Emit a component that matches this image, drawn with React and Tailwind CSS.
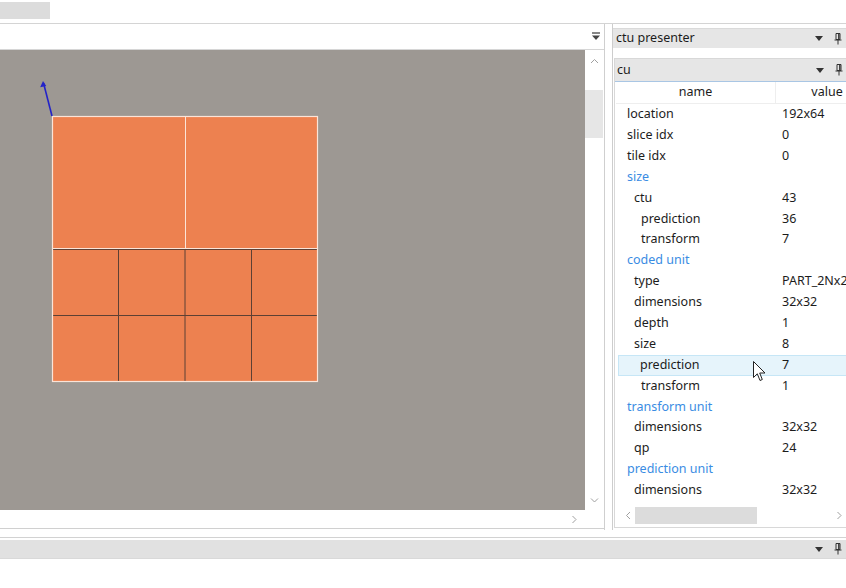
import React from "react";

const ROWS = [
  { name: "location", value: "192x64", level: 0 },
  { name: "slice idx", value: "0", level: 0 },
  { name: "tile idx", value: "0", level: 0 },
  { name: "size", level: 0, group: true },
  { name: "ctu", value: "43", level: 1 },
  { name: "prediction", value: "36", level: 2 },
  { name: "transform", value: "7", level: 2 },
  { name: "coded unit", level: 0, group: true },
  { name: "type", value: "PART_2Nx2N", level: 1 },
  { name: "dimensions", value: "32x32", level: 1 },
  { name: "depth", value: "1", level: 1 },
  { name: "size", value: "8", level: 1 },
  { name: "prediction", value: "7", level: 2, hover: true },
  { name: "transform", value: "1", level: 2 },
  { name: "transform unit", level: 0, group: true },
  { name: "dimensions", value: "32x32", level: 1 },
  { name: "qp", value: "24", level: 1 },
  { name: "prediction unit", level: 0, group: true },
  { name: "dimensions", value: "32x32", level: 1 },
  { name: "intra mode", value: "Intra", level: 1 },
];

const INDENT = ["pl-[10px]", "pl-[17px]", "pl-[24px]"];

const DropArrow = () => (
  <svg width="8" height="5" viewBox="0 0 8 5">
    <path d="M0 0 H8 L4 5 Z" fill="#333" />
  </svg>
);

const Pin = () => (
  <svg width="8" height="12" viewBox="0 0 8 12">
    <path d="M2 0.5 H6 V6.5 H2 Z" fill="none" stroke="#333" strokeWidth="1" />
    <path d="M4.8 0.5 V6.5" stroke="#333" strokeWidth="1.4" />
    <path d="M0.5 7 H7.5" stroke="#333" strokeWidth="1" />
    <path d="M4 7 V11.5" stroke="#333" strokeWidth="1" />
  </svg>
);

const MenuArrow = () => (
  <svg width="10" height="9" viewBox="0 0 10 9">
    <path d="M1 1 H9" stroke="#444" strokeWidth="1.3" />
    <path d="M1 3.5 H9 L5 8 Z" fill="#444" />
  </svg>
);

const Chevron = ({ dir }) => {
  const d = {
    up: "M1 5 L4.5 1.5 L8 5",
    down: "M1 1.5 L4.5 5 L8 1.5",
    left: "M5 1 L1.5 4.5 L5 8",
    right: "M1.5 1 L5 4.5 L1.5 8",
  }[dir];
  const vertical = dir === "up" || dir === "down";
  return (
    <svg width={vertical ? 9 : 7} height={vertical ? 7 : 9} viewBox={vertical ? "0 0 9 7" : "0 0 7 9"}>
      <path d={d} fill="none" stroke="#a0a0a0" strokeWidth="1" />
    </svg>
  );
};

const CtuCanvas = () => {
  const x0 = 52;
  const y0 = 66;
  const s = 266;
  const h = s / 2;
  const q = s / 4;
  return (
    <svg width="585" height="460" viewBox="0 0 585 460" className="block">
      <rect x="0" y="0" width="585" height="460" fill="#9d9893" />
      <rect x={x0} y={y0} width={s} height={s} fill="#ed8150" />
      {[1, 2, 3].map((i) => (
        <line key={"v" + i} x1={x0 + q * i} y1={y0 + h} x2={x0 + q * i} y2={y0 + s} stroke="#5d4034" strokeWidth="1" />
      ))}
      <line x1={x0} y1={y0 + h + 0.5} x2={x0 + s} y2={y0 + h + 0.5} stroke="#5d4034" strokeWidth="1" />
      <line x1={x0} y1={y0 + h + q} x2={x0 + s} y2={y0 + h + q} stroke="#5d4034" strokeWidth="1" />
      <rect x={x0 + 0.5} y={y0 + 0.5} width={h} height={h - 1} fill="none" stroke="#fbe4d8" strokeWidth="1" />
      <rect x={x0 + h + 0.5} y={y0 + 0.5} width={h - 1} height={h - 1} fill="none" stroke="#fbe4d8" strokeWidth="1" />
      <rect x={x0 + 0.5} y={y0 + 0.5} width={s - 1} height={s - 1} fill="none" stroke="#fbe4d8" strokeWidth="1.2" />
      <line x1={x0} y1={y0} x2={43.5} y2={33} stroke="#2323c8" strokeWidth="1.6" />
      <path d="M43 31 L40.2 37.2 L46.2 36 Z" fill="#2323c8" />
    </svg>
  );
};

const Cursor = () => (
  <svg width="13" height="21" viewBox="0 0 13 21">
    <path d="M0.5 0.5 V16.5 L4.3 12.8 L7 19.5 L9.3 18.5 L6.7 12 H12 Z" fill="#fff" stroke="#222" strokeWidth="1" strokeLinejoin="round" />
  </svg>
);

export default function App() {
  return (
    <div className="relative w-[846px] h-[588px] overflow-hidden bg-white flex flex-col font-['Noto_Sans',sans-serif] text-[12.5px] text-[#1c1c1c]">
      {/* top tab strip */}
      <div className="h-[24px] shrink-0 border-b border-[#d4d4d4]">
        <div className="mt-[2px] w-[50px] h-[17px] bg-[#dcdcdc]" />
      </div>

      <div className="flex h-[506px] shrink-0">
        {/* picture panel */}
        <div className="w-[605px] shrink-0 flex flex-col border-r border-[#cfcfcf]">
          <div className="h-[26px] shrink-0 flex items-center justify-end pr-[3px] border-b border-[#d6d6d6]">
            <MenuArrow />
          </div>
          <div className="flex h-[460px] shrink-0">
            <div className="w-[585px] shrink-0">
              <CtuCanvas />
            </div>
            <div className="w-[18px] shrink-0 flex flex-col items-center">
              <div className="h-[20px] flex items-center pt-[2px]">
                <Chevron dir="up" />
              </div>
              <div className="mt-[20px] w-full h-[48px] bg-[#e6e6e6]" />
              <div className="flex-1" />
              <div className="h-[20px] flex items-center">
                <Chevron dir="down" />
              </div>
            </div>
          </div>
          <div className="h-[19px] shrink-0 flex items-center justify-end pr-[26px] border-b border-[#d0d0d0]">
            <Chevron dir="right" />
          </div>
        </div>

        {/* dock column */}
        <div className="ml-[7px] flex-1 min-w-0 border-l border-[#cdcdcd] flex flex-col overflow-hidden">
          <div className="mt-[4px] h-[20px] shrink-0 bg-[#e6e6e6] border-t border-[#dadada] flex items-center pl-[3px] pr-[4px]">
            <span className="flex-1">ctu presenter</span>
            <span className="mr-[11px] flex"><DropArrow /></span>
            <Pin />
          </div>

          <div className="mt-[10px] ml-[1px] flex-1 min-h-0 border border-[#d8d8d8] border-r-0 flex flex-col mb-[2px]">
            <div className="h-[23px] shrink-0 bg-[#e6e6e6] border-b border-[#a9c6e4] flex items-center pl-[2px] pr-[3px]">
              <span className="flex-1">cu</span>
              <span className="mr-[11px] flex"><DropArrow /></span>
              <Pin />
            </div>

            <div className="relative flex-1 min-h-0 ml-[1px] overflow-hidden">
              <div className="flex h-[22px] items-center border-b border-[#eeeeee] w-[262px]">
                <div className="w-[160px] text-center border-r border-[#eeeeee] h-full flex items-center justify-center">name</div>
                <div className="w-[102px] text-center">value</div>
              </div>
              <div className="w-[262px]">
                {ROWS.map((r, i) => (
                  <div
                    key={i}
                    className={
                      "flex items-center h-[20.9px] whitespace-nowrap " +
                      (r.hover ? "ml-[2px] bg-[#e6f4fb] border border-[#c6e6f6] border-r-0" : "border border-transparent")
                    }
                  >
                    <div
                      className={
                        "w-[158px] shrink-0 " +
                        (r.hover ? "pl-[21px]" : INDENT[r.level]) +
                        (r.group ? " text-[#3a8ce3]" : "")
                      }
                    >
                      {r.name}
                    </div>
                    <div className={"pl-[7px] " + (r.hover ? "-ml-[2px]" : "")}>{r.value}</div>
                  </div>
                ))}
              </div>

              {/* horizontal scrollbar */}
              <div className="absolute left-0 right-0 top-[423px] h-[21px] bg-white flex items-center">
                <div className="w-[19px] flex justify-end pr-[3px]">
                  <Chevron dir="left" />
                </div>
                <div className="w-[122px] h-[17px] bg-[#dcdcdc]" />
                <div className="flex-1" />
                <div className="pr-[3px] flex">
                  <Chevron dir="right" />
                </div>
              </div>
            </div>
          </div>
        </div>
      </div>

      {/* bottom dock bar */}
      <div className="h-[7px] shrink-0" />
      <div className="h-[22px] shrink-0 border-t border-[#d2d2d2] flex flex-col">
        <div className="mt-[2px] h-[19px] bg-[#e1e1e1] border-b border-[#d9d9d9] flex items-center justify-end pr-[4px]">
          <span className="mr-[11px] flex"><DropArrow /></span>
          <Pin />
        </div>
      </div>

      <div className="absolute left-[753px] top-[361px]">
        <Cursor />
      </div>
    </div>
  );
}
